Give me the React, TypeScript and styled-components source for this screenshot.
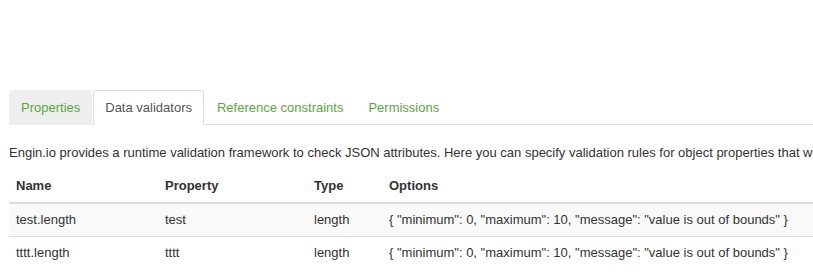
import styled, { createGlobalStyle } from "styled-components";

const GlobalStyle = createGlobalStyle`
    body {
        margin: 0;
        background: #fff;
        font-family: "Liberation Sans", Arial, sans-serif;
        font-size: 13px;
        color: #333;
    }
`;

const Page = styled.div`
    padding: 90px 0 0 9px;
    width: 804px;
    overflow: hidden;
`;

const Tabs = styled.ul`
    display: flex;
    margin: 0;
    padding: 0;
    list-style: none;
    border-bottom: 1px solid #ddd;
    height: 34px;
`;

const Tab = styled.li<{ $active?: boolean; $muted?: boolean }>`
    box-sizing: border-box;
    height: 35px;
    margin-right: 1px;
    padding: 1px 11px 0;
    display: flex;
    align-items: center;
    line-height: 18px;
    border: 1px solid ${(p) => (p.$active ? "#ddd" : "transparent")};
    border-bottom-color: ${(p) => (p.$active ? "#fff" : "transparent")};
    border-radius: 3px 3px 0 0;
    background: ${(p) => (p.$active ? "#fff" : p.$muted ? "#eee" : "transparent")};
    color: ${(p) => (p.$active ? "#555" : "#5aa83e")};
`;

const Intro = styled.p`
    margin: 19px 0 0;
    line-height: 18px;
    white-space: nowrap;
    overflow: hidden;
`;

const Table = styled.table`
    margin-top: 7px;
    width: 100%;
    table-layout: fixed;
    border-collapse: collapse;
    border-spacing: 0;
`;

const Th = styled.th<{ $w?: number }>`
    text-align: left;
    font-weight: bold;
    padding: 8px 7px 7px;
    line-height: 18px;
    border-bottom: 2px solid #ddd;
    width: ${(p) => (p.$w ? `${p.$w - 14}px` : "auto")};
`;

const Row = styled.tr<{ $striped?: boolean }>`
    background: ${(p) => (p.$striped ? "#f9f9f9" : "transparent")};
`;

const Td = styled.td`
    padding: 7px 7px 8px;
    line-height: 17px;
    border-top: 1px solid #ddd;
    white-space: nowrap;
    overflow: hidden;
`;

const rows = [
    { name: "test.length", property: "test", type: "length" },
    { name: "tttt.length", property: "tttt", type: "length" },
];

const options = '{ "minimum": 0, "maximum": 10, "message": "value is out of bounds" }';

export default function App() {
    return (
        <>
            <GlobalStyle />
            <Page>
                <Tabs>
                    <Tab $muted>Properties</Tab>
                    <Tab $active>Data validators</Tab>
                    <Tab>Reference constraints</Tab>
                    <Tab>Permissions</Tab>
                </Tabs>
                <Intro>
                    Engin.io provides a runtime validation framework to check JSON attributes. Here you can
                    specify validation rules for object properties that wi
                </Intro>
                <Table>
                    <thead>
                        <tr>
                            <Th $w={149}>Name</Th>
                            <Th $w={149}>Property</Th>
                            <Th $w={75}>Type</Th>
                            <Th>Options</Th>
                        </tr>
                    </thead>
                    <tbody>
                        {rows.map((r, i) => (
                            <Row key={r.name} $striped={i % 2 === 0}>
                                <Td>{r.name}</Td>
                                <Td>{r.property}</Td>
                                <Td>{r.type}</Td>
                                <Td>{options}</Td>
                            </Row>
                        ))}
                    </tbody>
                </Table>
            </Page>
        </>
    );
}
